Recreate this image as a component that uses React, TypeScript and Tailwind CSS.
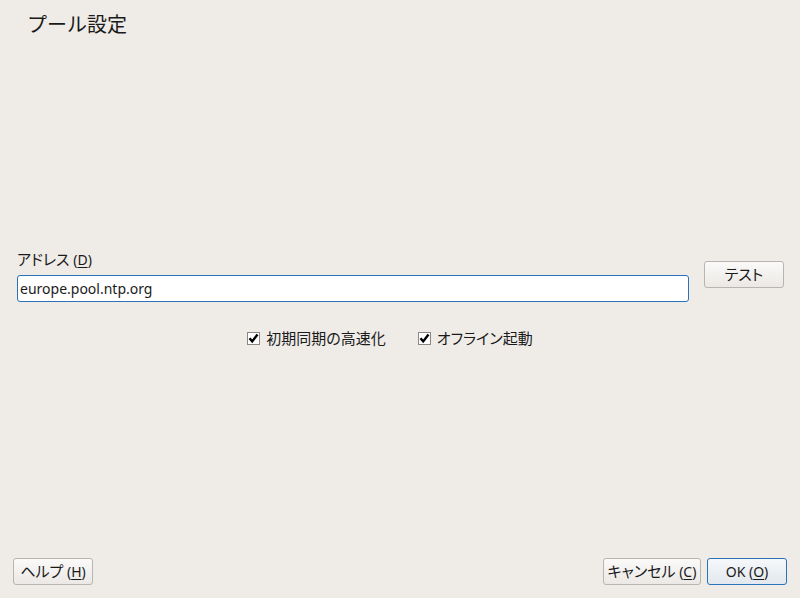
import React, { useState } from 'react';

const font = { fontFamily: '"Noto Sans", "Noto Sans CJK JP", sans-serif' };

// 日本語部分だけ少し大きめ + プロポーショナル字詰め
function Jp({ children }: { children: React.ReactNode }) {
  return <span className="text-[15px] [font-feature-settings:'palt']">{children}</span>;
}

function Check({ label, checked, onToggle }: { label: string; checked: boolean; onToggle: () => void }) {
  return (
    <label className="flex items-center gap-[6px] cursor-pointer" onClick={onToggle}>
      <span className="w-[13px] h-[13px] bg-white border border-[#8a8785] flex items-center justify-center">
        {checked && (
          <svg width="11" height="11" viewBox="0 0 11 11">
            <path d="M1.5 5.3 L4.2 8.4 L9.5 1.6" fill="none" stroke="#000" strokeWidth="2.4" />
          </svg>
        )}
      </span>
      <span className="text-[#1a1a1a] leading-[20px]"><Jp>{label}</Jp></span>
    </label>
  );
}

export default function App() {
  const [address, setAddress] = useState('europe.pool.ntp.org');
  const [fast, setFast] = useState(true);
  const [offline, setOffline] = useState(true);

  const btn =
    'h-[27px] rounded-[3px] border border-[#b8b4b0] bg-gradient-to-b from-[#fbfaf9] to-[#ebe8e5] text-[14px] text-[#1a1a1a] flex items-center justify-center';

  return (
    <div className="w-[800px] h-[598px] bg-[#efebe7] flex flex-col overflow-hidden" style={font}>
      <div className="pl-[27px] pt-[10px] h-[40px] text-[20px] text-[#1a1a1a] leading-[30px]">プール設定</div>

      <div className="flex-1 flex flex-col justify-start pt-[208px]">
        <div className="flex items-start px-[17px] gap-[15px]">
          <div className="flex-1 flex flex-col">
            <div className="text-[14px] text-[#1a1a1a] leading-[20px] h-[27px] pt-[1px]">
              <Jp>アドレス</Jp> (<span className="underline underline-offset-2">D</span>)
            </div>
            <input
              className="h-[27px] w-full bg-white border border-[#2a73b8] rounded-[3px] px-[2px] text-[14px] text-[#1a1a1a] outline-none"
              value={address}
              onChange={e => setAddress(e.target.value)}
            />
          </div>
          <button className={btn + ' w-[80px] mt-[13px] mr-[-1px]'}><Jp>テスト</Jp></button>
        </div>

        <div className="flex justify-center gap-[32px] mt-[26px] pr-[20px]">
          <Check label="初期同期の高速化" checked={fast} onToggle={() => setFast(!fast)} />
          <Check label="オフライン起動" checked={offline} onToggle={() => setOffline(!offline)} />
        </div>
      </div>

      <div className="flex items-center px-[13px] pb-[13px]">
        <button className={btn + ' w-[80px]'}>
          <Jp>ヘルプ</Jp>&nbsp;(<span className="underline underline-offset-2">H</span>)
        </button>
        <div className="flex-1" />
        <button className={btn + ' w-[98px]'}>
          <Jp>キャンセル</Jp>&nbsp;(<span className="underline underline-offset-2">C</span>)
        </button>
        <button className="ml-[6px] w-[80px] h-[27px] rounded-[3px] border border-[#2a73b8] bg-gradient-to-b from-[#f6f8fa] to-[#e2e8ee] text-[14px] text-[#1a1a1a] flex items-center justify-center">
          OK (<span className="underline underline-offset-2">O</span>)
        </button>
      </div>
    </div>
  );
}
